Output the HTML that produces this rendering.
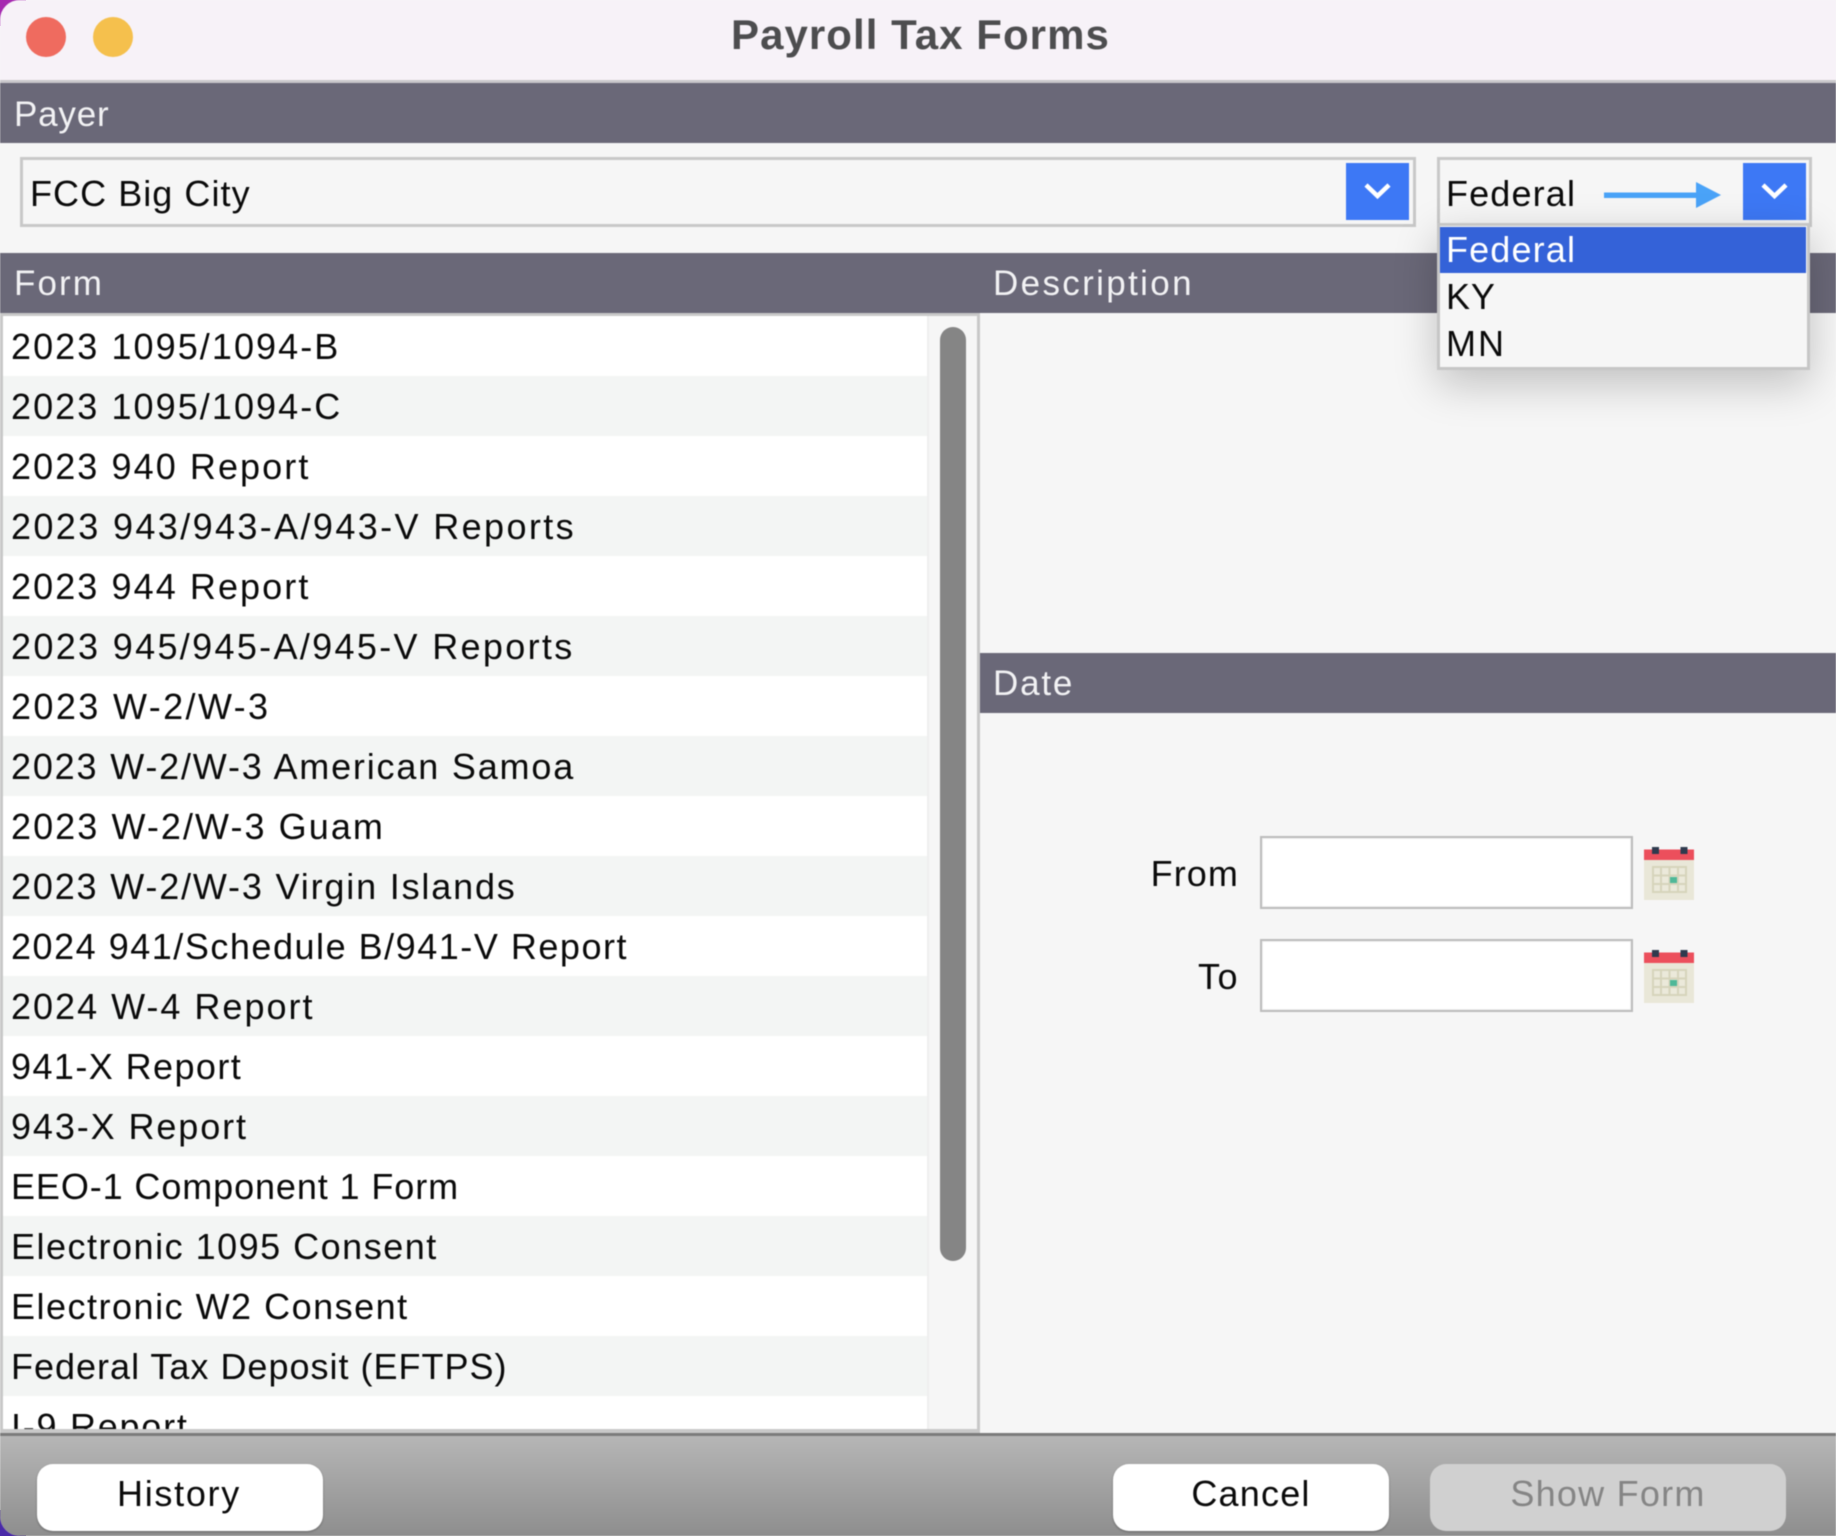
<!DOCTYPE html>
<html><head><meta charset="utf-8"><title>Payroll Tax Forms</title>
<style>
html,body{margin:0;padding:0;width:1836px;height:1536px;overflow:hidden;background:#f6f6f6}
body{position:relative;font-family:"Liberation Sans",sans-serif;color:#0a0a0a}
.cn{position:absolute;left:0;width:26px;height:26px}
#win{position:absolute;left:0;top:0;width:1836px;height:1536px;background:#f6f6f6;border-radius:20px 0 0 20px;overflow:hidden;filter:blur(.45px)}
.a{position:absolute}
.t{position:absolute;white-space:nowrap;font-size:36px;line-height:60px;letter-spacing:1.15px}
.bar{position:absolute;background:#6a6878}
.h{position:absolute;white-space:nowrap;color:#f2f2f4;font-size:35px;line-height:60px;letter-spacing:1.5px}
.row{position:absolute;left:0;width:924px;height:60px;background:#fff}
.row.alt{background:#f3f5f4}
.row span{position:absolute;left:8px;top:1px;white-space:nowrap;font-size:36px;line-height:60px;letter-spacing:2px}
.combo{position:absolute;top:157px;height:64px;background:#f6f6f6;border:3px solid #c8c8c8}
.blue{position:absolute;background:#3d78f5}
.btn{position:absolute;top:1464px;height:67px;border-radius:16px;background:#fff;text-align:center;font-size:36px;line-height:60px;letter-spacing:1.5px;box-shadow:0 1px 2px rgba(0,0,0,.3);box-sizing:border-box}
.inp{position:absolute;left:1260px;width:369px;background:#fff;border:2px solid #bcbcbc;box-shadow:inset 0 0 0 1px #efefef;height:69px}
</style></head><body>
<div class="cn" style="top:0;background:#a62ab0"></div>
<div class="cn" style="bottom:0;background:#4a2aa8"></div>
<div id="win">
  <div class="a" style="left:0;top:0;width:1836px;height:80px;background:#f7f2f8"></div>
  <div class="a" style="left:0;top:80px;width:1836px;height:3px;background:#c9c7cb"></div>
  <div class="a" style="left:26px;top:17px;width:40px;height:40px;border-radius:50%;background:#ef6b5f"></div>
  <div class="a" style="left:93px;top:17px;width:40px;height:40px;border-radius:50%;background:#f5c04d"></div>
  <div class="t" style="left:731px;top:5px;font-size:42px;font-weight:bold;color:#4d4d4f;letter-spacing:1.05px">Payroll Tax Forms</div>

  <div class="bar" style="left:0;top:83px;width:1836px;height:60px"></div>
  <div class="h" style="left:14px;top:85px;letter-spacing:.8px">Payer</div>

  <div class="combo" style="left:20px;width:1390px"></div>
  <div class="t" style="left:30px;top:164px;letter-spacing:1.05px">FCC Big City</div>
  <div class="blue" style="left:1346px;top:163px;width:63px;height:57px"></div>
  <svg class="a" style="left:1346px;top:163px" width="63" height="57"><path d="M20 22L31.5 33L43 22" fill="none" stroke="#fff" stroke-width="4.5"/></svg>

  <div class="bar" style="left:0;top:253px;width:1836px;height:60px"></div>
  <div class="a" style="left:0;top:313px;width:980px;height:3px;background:#c8c8c8"></div>
  <div class="h" style="left:14px;top:254px;letter-spacing:2.1px">Form</div>
  <div class="h" style="left:993px;top:254px;letter-spacing:2.35px">Description</div>

  <div class="a" style="left:0;top:316px;width:3px;height:1117px;background:#c8c8c8"></div>
  <div class="a" style="left:3px;top:316px;width:974px;height:1113px;overflow:hidden;background:#f6f6f6">
    <div class="row" style="top:0"><span style="letter-spacing:2.07px">2023 1095/1094-B</span></div>
    <div class="row alt" style="top:60px"><span style="letter-spacing:2.07px">2023 1095/1094-C</span></div>
    <div class="row" style="top:120px"><span style="letter-spacing:2.08px">2023 940 Report</span></div>
    <div class="row alt" style="top:180px"><span style="letter-spacing:2.38px">2023 943/943-A/943-V Reports</span></div>
    <div class="row" style="top:240px"><span style="letter-spacing:2.08px">2023 944 Report</span></div>
    <div class="row alt" style="top:300px"><span style="letter-spacing:2.33px">2023 945/945-A/945-V Reports</span></div>
    <div class="row" style="top:360px"><span style="letter-spacing:2.39px">2023 W-2/W-3</span></div>
    <div class="row alt" style="top:420px"><span style="letter-spacing:1.82px">2023 W-2/W-3 American Samoa</span></div>
    <div class="row" style="top:480px"><span style="letter-spacing:2.07px">2023 W-2/W-3 Guam</span></div>
    <div class="row alt" style="top:540px"><span style="letter-spacing:1.83px">2023 W-2/W-3 Virgin Islands</span></div>
    <div class="row" style="top:600px"><span style="letter-spacing:1.52px">2024 941/Schedule B/941-V Report</span></div>
    <div class="row alt" style="top:660px"><span>2024 W-4 Report</span></div>
    <div class="row" style="top:720px"><span style="letter-spacing:1.42px">941-X Report</span></div>
    <div class="row alt" style="top:780px"><span style="letter-spacing:1.9px">943-X Report</span></div>
    <div class="row" style="top:840px"><span style="letter-spacing:.9px">EEO-1 Component 1 Form</span></div>
    <div class="row alt" style="top:900px"><span style="letter-spacing:1.5px">Electronic 1095 Consent</span></div>
    <div class="row" style="top:960px"><span style="letter-spacing:1.5px">Electronic W2 Consent</span></div>
    <div class="row alt" style="top:1020px"><span style="letter-spacing:1px">Federal Tax Deposit (EFTPS)</span></div>
    <div class="row" style="top:1080px"><span style="letter-spacing:1.75px">I-9 Report</span></div>
    <div class="a" style="left:924px;top:0;width:2px;height:1113px;background:#efefef"></div>
    <div class="a" style="left:937px;top:11px;width:26px;height:934px;border-radius:13px;background:#858585"></div>
  </div>
  <div class="a" style="left:977px;top:313px;width:3px;height:1120px;background:#c8c8c8"></div>
  <div class="a" style="left:0;top:1429px;width:980px;height:4px;background:#c8c8c8"></div>

  <div class="bar" style="left:980px;top:653px;width:856px;height:60px"></div>
  <div class="h" style="left:993px;top:654px;letter-spacing:1.8px">Date</div>

  <div class="t" style="right:597px;top:844px;letter-spacing:1.1px">From</div>
  <div class="t" style="right:597px;top:947px;letter-spacing:1.5px">To</div>
  <div class="inp" style="top:836px"></div>
  <div class="inp" style="top:939px"></div>

  <svg class="a" style="left:1644px;top:845px" width="50" height="56" viewBox="0 0 50 56">
    <rect y="15" width="50" height="40" fill="#e9e7d8"/><rect y="4.500" width="50" height="10.500" fill="#ec4f5c"/>
    <rect x="8" y="2" width="7" height="7" fill="#2f3a4e"/><rect x="36.500" y="2" width="7" height="7" fill="#2f3a4e"/>
    <rect x="8" y="21" width="35" height="27" fill="#ebe9da"/>
    <path d="M9 22H42V47H9ZM17 22V47M25.500 22V47M34 22V47M9 30.500H42M9 39H42" fill="none" stroke="#d6d4bb" stroke-width="2"/>
    <rect x="26" y="32" width="7" height="6" fill="#4fb898"/>
  </svg>
  <svg class="a" style="left:1644px;top:948px" width="50" height="56" viewBox="0 0 50 56">
    <rect y="15" width="50" height="40" fill="#e9e7d8"/><rect y="4.500" width="50" height="10.500" fill="#ec4f5c"/>
    <rect x="8" y="2" width="7" height="7" fill="#2f3a4e"/><rect x="36.500" y="2" width="7" height="7" fill="#2f3a4e"/>
    <rect x="8" y="21" width="35" height="27" fill="#ebe9da"/>
    <path d="M9 22H42V47H9ZM17 22V47M25.500 22V47M34 22V47M9 30.500H42M9 39H42" fill="none" stroke="#d6d4bb" stroke-width="2"/>
    <rect x="26" y="32" width="7" height="6" fill="#4fb898"/>
  </svg>

  <div class="combo" style="left:1437px;width:369px"></div>
  <div class="t" style="left:1446px;top:164px">Federal</div>
  <svg class="a" style="left:1600px;top:178px" width="125" height="34"><path d="M4 14.500H96V4L121 17L96 30V20H4Z" fill="#4aa3f8"/></svg>
  <div class="blue" style="left:1743px;top:163px;width:63px;height:57px"></div>
  <svg class="a" style="left:1743px;top:163px" width="63" height="57"><path d="M20 22L31.500 33L43 22" fill="none" stroke="#fff" stroke-width="4.500"/></svg>

  <div class="a" style="left:1437px;top:223px;width:367px;height:141px;background:#f6f6f6;border:3px solid #c6c6c6;box-shadow:0 14px 40px rgba(0,0,0,.22)"></div>
  <div class="a" style="left:1440px;top:227px;width:366px;height:46px;background:#3462d8"></div>
  <div class="t" style="left:1446px;top:220px;color:#fff">Federal</div>
  <div class="t" style="left:1446px;top:267px;letter-spacing:.85px">KY</div>
  <div class="t" style="left:1446px;top:314px;letter-spacing:2px">MN</div>

  <div class="a" style="left:0;top:1433px;width:1836px;height:3px;background:#7b7b7b"></div>
  <div class="a" style="left:0;top:1436px;width:1836px;height:100px;background:linear-gradient(180deg,#b6b6b6,#8e8e8e)"></div>
  <div class="btn" style="left:37px;width:286px;letter-spacing:1.7px;padding-right:2px">History</div>
  <div class="btn" style="left:1113px;width:276px;letter-spacing:1.2px">Cancel</div>
  <div class="btn" style="left:1430px;width:356px;background:#d0d0d0;color:#858585;box-shadow:none;letter-spacing:1.25px">Show Form</div>
</div>
</body></html>
